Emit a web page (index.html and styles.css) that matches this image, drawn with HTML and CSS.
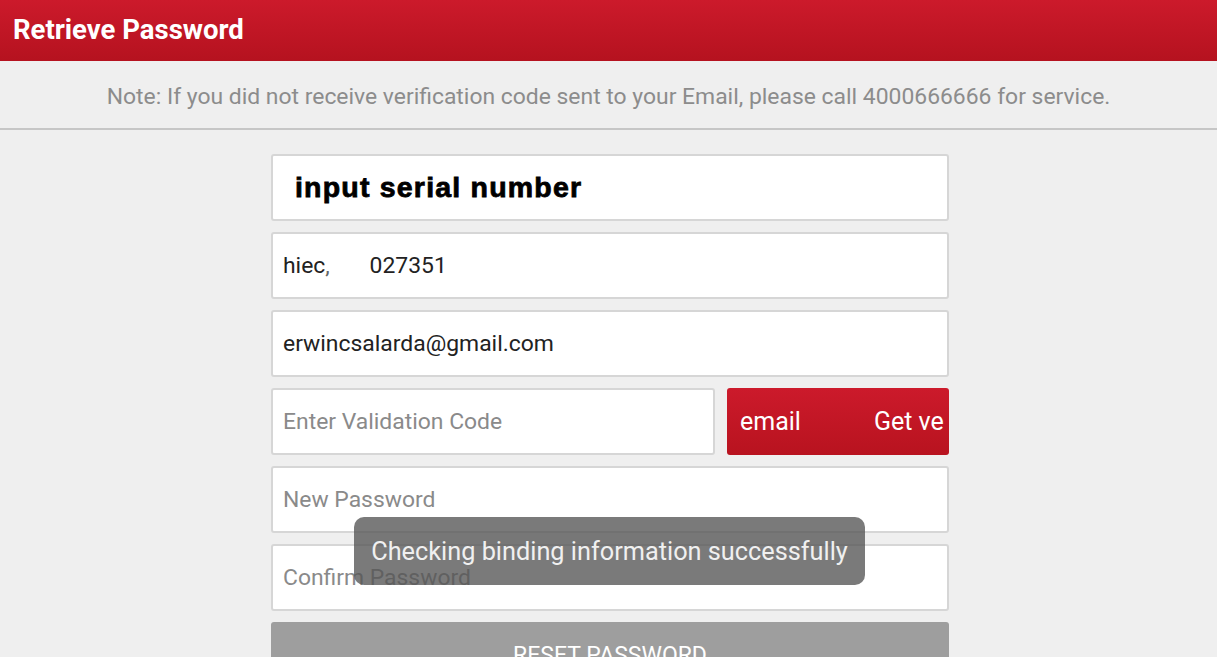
FILE: index.html
```html
<!DOCTYPE html>
<html lang="en">
<head>
    <meta charset="UTF-8">
    <meta name="viewport" content="width=device-width, initial-scale=1.0">
    <title>Retrieve Password</title>
    <link rel="stylesheet" href="styles.css">
</head>
    <body>
        <div class="topbar">Retrieve Password</div>
        <div class="note">Note: If you did not receive verification code sent to your Email, please call 4000666666 for service.</div>
        <div class="container">
            <form class="form">
                <div class="field serial">input serial number</div>
                <div class="field">hiec<span class="blur">,</span>&nbsp;&nbsp;&nbsp;&nbsp;&nbsp;&nbsp;&nbsp;027351</div>
                <div class="field">erwincsalarda@gmail.com</div>
                <div class="row">
                    <div class="field placeholder code">Enter Validation Code</div>
                    <button type="button" class="getcode"><span>email</span><span>Get ve</span></button>
                </div>
                <div class="field placeholder">New Password</div>
                <div class="field placeholder">Confirm Password</div>
                <button type="button" class="reset">RESET PASSWORD</button>
            </form>
            <div class="toast">Checking binding information successfully</div>
        </div>
    </body>
</html>
```

FILE: styles.css
```css
body
{
    margin: 0;
    font-family: Roboto, "Liberation Sans", sans-serif;
    background-color: #efefef;
    height: 657px;
    overflow: hidden;
}
.topbar
{
    height: 61px;
    box-sizing: border-box;
    padding: 13px 13px;
    background: linear-gradient(#cc1a2b, #b5121f);
    color: white;
    font-size: 27.5px;
    font-weight: bold;
    line-height: 34px;
}
.note
{
    height: 69px;
    box-sizing: border-box;
    border-bottom: 2px solid #c6c6c6;
    text-align: center;
    color: #8c8c8c;
    font-size: 22.9px;
    line-height: 72px;
}
.container
{
    position: relative;
    width: 678px;
    margin: 24px 0 0 271px;
}
.form
{
    display: flex;
    flex-direction: column;
    gap: 11px;
}
.field
{
    height: 67px;
    box-sizing: border-box;
    background: white;
    border: 2px solid #d6d6d6;
    border-radius: 3px;
    padding: 0 10px;
    display: flex;
    align-items: center;
    font-size: 22.9px;
    color: #222;
}
.serial
{
    padding-left: 22px;
    font-family: "Liberation Sans", Arial, sans-serif;
    font-weight: 900;
    font-size: 28.5px;
    letter-spacing: 1.2px;
    color: black;
    -webkit-text-stroke: 0.8px black;
}
.blur
{
    color: #666;
}
.placeholder
{
    color: #8a8a8a;
}
.row
{
    display: flex;
    gap: 12px;
}
.code
{
    flex: 0 0 444px;
}
.getcode
{
    flex: 1;
    height: 67px;
    border: none;
    border-radius: 3px;
    background: linear-gradient(#cc1a2b, #b8131f);
    color: white;
    font-family: Roboto, sans-serif;
    font-size: 25px;
    display: flex;
    align-items: center;
    gap: 73px;
    padding: 0 0 0 13px;
    overflow: hidden;
    white-space: nowrap;
}
.reset
{
    height: 67px;
    border: none;
    border-radius: 3px;
    background: #9e9e9e;
    color: white;
    font-family: Roboto, sans-serif;
    font-size: 23px;
}
.toast
{
    position: absolute;
    left: 83px;
    top: 363px;
    width: 511px;
    height: 68px;
    box-sizing: border-box;
    border-radius: 10px;
    background: rgba(85, 85, 85, 0.78);
    color: #f0f0f0;
    font-size: 25.3px;
    line-height: 70px;
    text-align: center;
    white-space: nowrap;
}
```
